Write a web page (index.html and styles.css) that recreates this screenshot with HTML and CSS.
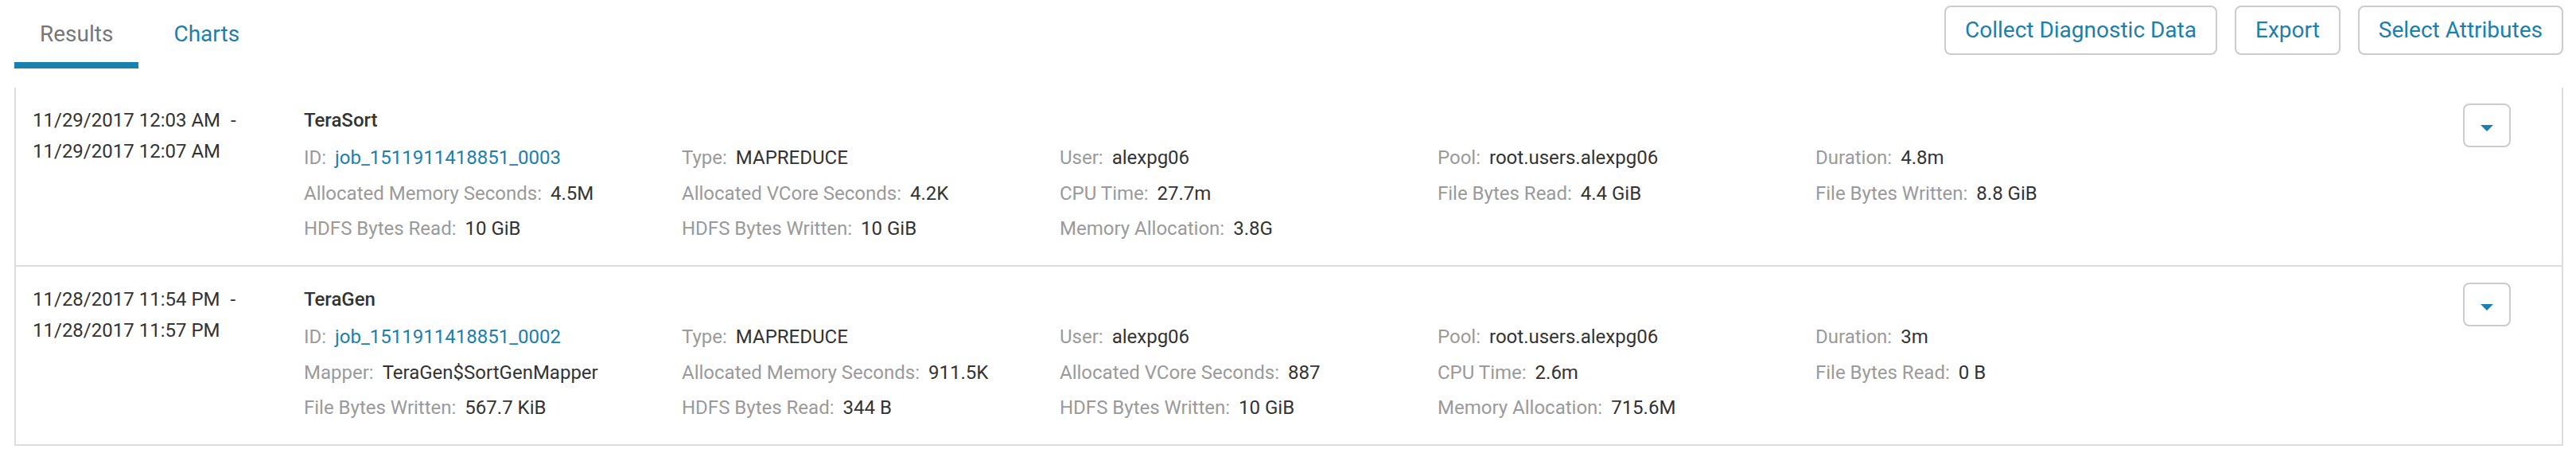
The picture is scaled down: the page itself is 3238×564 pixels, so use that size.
FILE: index.html
```html
<!DOCTYPE html>
<html lang="en">
<head>
<meta charset="utf-8">
<title>Results</title>
<link rel="stylesheet" href="styles.css">
</head>
<body>
<div class="page">
  <header class="toolbar">
    <nav class="tabs">
      <a class="tab tab-active">Results</a>
      <a class="tab">Charts</a>
    </nav>
    <div class="actions">
      <button class="btn">Collect Diagnostic Data</button>
      <button class="btn">Export</button>
      <button class="btn">Select Attributes</button>
    </div>
  </header>

  <section class="list">
    <article class="row">
      <div class="dates">
        <div>11/29/2017 12:03 AM<span class="dash">-</span></div>
        <div>11/29/2017 12:07 AM</div>
      </div>
      <div class="main">
        <div class="name">TeraSort</div>
        <div class="attrs">
          <div class="attr"><span class="lbl">ID:</span><a class="val link">job_1511911418851_0003</a></div>
          <div class="attr"><span class="lbl">Type:</span><span class="val">MAPREDUCE</span></div>
          <div class="attr"><span class="lbl">User:</span><span class="val">alexpg06</span></div>
          <div class="attr"><span class="lbl">Pool:</span><span class="val">root.users.alexpg06</span></div>
          <div class="attr"><span class="lbl">Duration:</span><span class="val">4.8m</span></div>
          <div class="attr"><span class="lbl">Allocated Memory Seconds:</span><span class="val">4.5M</span></div>
          <div class="attr"><span class="lbl">Allocated VCore Seconds:</span><span class="val">4.2K</span></div>
          <div class="attr"><span class="lbl">CPU Time:</span><span class="val">27.7m</span></div>
          <div class="attr"><span class="lbl">File Bytes Read:</span><span class="val">4.4 GiB</span></div>
          <div class="attr"><span class="lbl">File Bytes Written:</span><span class="val">8.8 GiB</span></div>
          <div class="attr"><span class="lbl">HDFS Bytes Read:</span><span class="val">10 GiB</span></div>
          <div class="attr"><span class="lbl">HDFS Bytes Written:</span><span class="val">10 GiB</span></div>
          <div class="attr"><span class="lbl">Memory Allocation:</span><span class="val">3.8G</span></div>
        </div>
      </div>
      <button class="caret-btn" aria-label="Actions"><span class="caret"></span></button>
    </article>

    <article class="row">
      <div class="dates">
        <div>11/28/2017 11:54 PM<span class="dash">-</span></div>
        <div>11/28/2017 11:57 PM</div>
      </div>
      <div class="main">
        <div class="name">TeraGen</div>
        <div class="attrs">
          <div class="attr"><span class="lbl">ID:</span><a class="val link">job_1511911418851_0002</a></div>
          <div class="attr"><span class="lbl">Type:</span><span class="val">MAPREDUCE</span></div>
          <div class="attr"><span class="lbl">User:</span><span class="val">alexpg06</span></div>
          <div class="attr"><span class="lbl">Pool:</span><span class="val">root.users.alexpg06</span></div>
          <div class="attr"><span class="lbl">Duration:</span><span class="val">3m</span></div>
          <div class="attr"><span class="lbl">Mapper:</span><span class="val">TeraGen$SortGenMapper</span></div>
          <div class="attr"><span class="lbl">Allocated Memory Seconds:</span><span class="val">911.5K</span></div>
          <div class="attr"><span class="lbl">Allocated VCore Seconds:</span><span class="val">887</span></div>
          <div class="attr"><span class="lbl">CPU Time:</span><span class="val">2.6m</span></div>
          <div class="attr"><span class="lbl">File Bytes Read:</span><span class="val">0 B</span></div>
          <div class="attr"><span class="lbl">File Bytes Written:</span><span class="val">567.7 KiB</span></div>
          <div class="attr"><span class="lbl">HDFS Bytes Read:</span><span class="val">344 B</span></div>
          <div class="attr"><span class="lbl">HDFS Bytes Written:</span><span class="val">10 GiB</span></div>
          <div class="attr"><span class="lbl">Memory Allocation:</span><span class="val">715.6M</span></div>
        </div>
      </div>
      <button class="caret-btn" aria-label="Actions"><span class="caret"></span></button>
    </article>
  </section>
</div>
</body>
</html>
```

FILE: styles.css
```css
* {
  box-sizing: border-box;
}

html, body {
  margin: 0;
  padding: 0;
  background: #ffffff;
}

body {
  font-family: Roboto, "Liberation Sans", Arial, sans-serif;
  color: #333333;
  font-size: 24px;
}

.page {
  padding: 0 16px 0 18px;
}

/* Toolbar */
.toolbar {
  display: flex;
  justify-content: space-between;
  align-items: flex-start;
}

.tabs {
  display: flex;
}

.tab {
  display: block;
  font-size: 28px;
  line-height: 40px;
  padding: 23px 32px 15px;
  border-bottom: 8px solid transparent;
  color: #1a80ad;
  margin-right: 12px;
}

.tab-active {
  color: #777777;
  border-bottom-color: #1a80ad;
}

.actions {
  display: flex;
  gap: 22px;
  margin-top: 7px;
}

.btn {
  font-family: inherit;
  font-size: 28px;
  line-height: 40px;
  height: 62px;
  padding: 0 24px;
  color: #1a80ad;
  background: #ffffff;
  border: 2px solid #cccccc;
  border-radius: 8px;
}

/* List */
.list {
  margin-top: 24px;
  border-left: 2px solid #dddddd;
  border-right: 2px solid #dddddd;
}

.row {
  display: flex;
  align-items: flex-start;
  padding: 23px 0 23.5px 21px;
  border-bottom: 2px solid #dddddd;
}

.dates {
  width: 341px;
  flex: none;
  line-height: 39px;
  margin-top: -1.5px;
  color: #333333;
}

.dash {
  margin-left: 13px;
}

.main {
  flex: 1;
}

.name {
  font-weight: 500;
  line-height: 36px;
  color: #333333;
}

.attrs {
  margin-top: 7px;
  display: grid;
  grid-template-columns: repeat(5, 475px);
  grid-auto-rows: 44.5px;
  line-height: 44.5px;
}

.attr {
  white-space: nowrap;
}

.lbl {
  color: #9a9a9a;
}

.val {
  margin-left: 11px;
  color: #333333;
}

.link {
  color: #1a80ad;
}

.caret-btn {
  flex: none;
  width: 60px;
  height: 55px;
  margin-top: -3px;
  margin-right: 64px;
  padding: 25px 0 0;
  display: flex;
  justify-content: center;
  align-items: flex-start;
  background: #ffffff;
  border: 2px solid #cccccc;
  border-radius: 8px;
}

.caret {
  width: 0;
  height: 0;
  border-left: 8px solid transparent;
  border-right: 8px solid transparent;
  border-top: 8px solid #1a80ad;
}
```
